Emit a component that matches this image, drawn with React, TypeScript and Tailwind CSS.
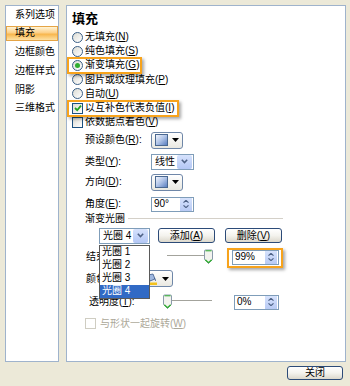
import React from 'react';

const font = "font-['Liberation_Sans','Noto_Sans_CJK_SC',sans-serif]";

const Ul = ({ c }: { c: string }) => (
  <>
    (<span className="underline">{c}</span>)
  </>
);

function Radio({ checked }: { checked?: boolean }) {
  return (
    <span className="w-[11px] h-[11px] shrink-0 rounded-full border border-[#3a5f86] bg-gradient-to-br from-[#dcdcd4] to-white flex items-center justify-center">
      {checked && <span className="w-[5px] h-[5px] rounded-full bg-[#2fae2f]" />}
    </span>
  );
}

function Check({ checked, disabled }: { checked?: boolean; disabled?: boolean }) {
  return (
    <span
      className={`w-[11px] h-[11px] shrink-0 border flex items-center justify-center ${
        disabled ? 'border-[#cfcdc2] bg-white' : 'border-[#1c5180] bg-gradient-to-br from-[#dcdcd4] to-white'
      }`}
    >
      {checked && (
        <svg width="8" height="8" viewBox="0 0 8 8">
          <path d="M1 4 L3.2 6.2 L7 1.6" stroke="#21a121" strokeWidth="1.8" fill="none" />
        </svg>
      )}
    </span>
  );
}

function Highlight({ className }: { className: string }) {
  return (
    <span
      className={`absolute border-2 border-[#f7a31c] shadow-[2px_2px_3px_rgba(0,0,0,0.35)] pointer-events-none ${className}`}
    />
  );
}

function ColorButton({ children }: { children?: React.ReactNode }) {
  return (
    <div className="w-[32px] h-[17px] shrink-0 rounded-[3px] border border-[#6f87a8] bg-gradient-to-b from-white to-[#e9e8e1] flex items-center pl-[3px] gap-[4px]">
      {children ?? (
        <span className="w-[13px] h-[12px] border border-[#4a6890] bg-gradient-to-br from-[#f2f5fc] via-[#aec2e6] to-[#5b7fbf]" />
      )}
      <svg width="7" height="4" viewBox="0 0 7 4">
        <path d="M0 0 H7 L3.5 4 Z" fill="#000" />
      </svg>
    </div>
  );
}

function Combo({ text, width }: { text: string; width: string }) {
  return (
    <div className={`h-[16px] ${width} shrink-0 border border-[#7f9db9] bg-white flex items-center`}>
      <span className="flex-1 pl-[3px] leading-none whitespace-pre">{text}</span>
      <span className="w-[15px] h-[14px] mr-px bg-gradient-to-b from-[#d6e2fc] to-[#b3c7f5] rounded-[2px] flex items-center justify-center">
        <svg width="7" height="5" viewBox="0 0 7 5">
          <path d="M0.8 0.8 L3.5 3.6 L6.2 0.8" stroke="#4d6185" strokeWidth="1.5" fill="none" />
        </svg>
      </span>
    </div>
  );
}

function Spin({ value, width }: { value: string; width: string }) {
  return (
    <div className={`h-[15px] ${width} shrink-0 border border-[#7f9db9] bg-white flex items-center`}>
      <span className="flex-1 pl-[2px] leading-none">{value}</span>
      <span className="w-[12px] h-[13px] mr-px bg-gradient-to-b from-[#d6e2fc] to-[#b8caf4] flex flex-col items-center justify-center gap-[2px]">
        <svg width="6" height="3" viewBox="0 0 6 3">
          <path d="M0.5 2.6 L3 0.4 L5.5 2.6" stroke="#4d6185" strokeWidth="1.2" fill="none" />
        </svg>
        <svg width="6" height="3" viewBox="0 0 6 3">
          <path d="M0.5 0.4 L3 2.6 L5.5 0.4" stroke="#4d6185" strokeWidth="1.2" fill="none" />
        </svg>
      </span>
    </div>
  );
}

function PushButton({ children, className }: { children: React.ReactNode; className: string }) {
  return (
    <div
      className={`rounded-[3px] border border-[#2c4b78] bg-gradient-to-b from-white via-[#f4f3ee] to-[#dcd8cc] flex items-center justify-center leading-none ${className}`}
    >
      {children}
    </div>
  );
}

function Slider({ pos }: { pos: number }) {
  const x = pos * 41;
  return (
    <svg width="50" height="16" viewBox="0 0 50 16" className="shrink-0">
      <line x1="4" y1="6.5" x2="49" y2="6.5" stroke="#a3a39c" />
      <line x1="4" y1="7.5" x2="49" y2="7.5" stroke="#ffffff" />
      <g transform={`translate(${x},0.5)`}>
        <path
          d="M0.5 1.5 Q0.5 0.5 1.5 0.5 H7.5 Q8.5 0.5 8.5 1.5 V10 L4.5 14 L0.5 10 Z"
          fill="#f3f3ef"
          stroke="#8b9bab"
        />
        <path d="M1.3 10.2 L4.5 13.2 L7.7 10.2" stroke="#2fae2f" strokeWidth="1.3" fill="none" />
        <line x1="1.5" y1="1.3" x2="7.5" y2="1.3" stroke="#2fae2f" strokeWidth="1" />
      </g>
    </svg>
  );
}

function Sidebar() {
  const items = ['系列选项', '填充', '边框颜色', '边框样式', '阴影', '三维格式'];
  return (
    <div className="w-[54px] h-[357px] shrink-0 border border-[#9fb3cc] bg-white flex flex-col">
      {items.map((t) =>
        t === '填充' ? (
          <div key={t} className="h-[18.6px] flex items-start pt-px">
            <div className="h-[15px] w-full flex items-center pl-[8px] border border-[#e5a445] bg-[linear-gradient(to_bottom,#fff4d6,#fccf86_45%,#f8b64c_55%,#fde1a4)] leading-none">
              {t}
            </div>
          </div>
        ) : (
          <div key={t} className="h-[18.6px] flex items-center pl-[9px] leading-none">
            {t}
          </div>
        )
      )}
    </div>
  );
}

function Main() {
  return (
    <div className="ml-[7px] w-[280px] h-[357px] shrink-0 border border-[#9fb3cc] bg-white flex flex-col pl-[5px]">
      <div className="mt-[4px] h-[16px] flex items-center text-[13px] font-bold leading-none">填充</div>

      <div className="mt-[4px] flex flex-col">
        <div className="h-[14.2px] flex items-center gap-[2px]">
          <Radio />
          <span className="leading-none">无填充<Ul c="N" /></span>
        </div>
        <div className="h-[14.2px] flex items-center gap-[2px]">
          <Radio />
          <span className="leading-none">纯色填充<Ul c="S" /></span>
        </div>
        <div className="relative h-[14.2px] flex items-center gap-[2px]">
          <Radio checked />
          <span className="leading-none">渐变填充<Ul c="G" /></span>
          <Highlight className="left-[-5px] top-[-1.5px] w-[75px] h-[17px]" />
        </div>
        <div className="h-[14.2px] flex items-center gap-[2px]">
          <Radio />
          <span className="leading-none">图片或纹理填充<Ul c="P" /></span>
        </div>
        <div className="h-[14.2px] flex items-center gap-[2px]">
          <Radio />
          <span className="leading-none">自动<Ul c="U" /></span>
        </div>
        <div className="relative h-[14.2px] flex items-center gap-[2px]">
          <Check checked />
          <span className="leading-none">以互补色代表负值<Ul c="I" /></span>
          <Highlight className="left-[-5px] top-[-1px] w-[112px] h-[17px]" />
        </div>
        <div className="h-[14.2px] flex items-center gap-[2px]">
          <Check />
          <span className="leading-none">依数据点着色<Ul c="V" /></span>
        </div>
      </div>

      <div className="flex flex-col pl-[13px]">
        <div className="mt-[2.6px] h-[17px] flex items-center">
          <span className="w-[66px] shrink-0 leading-none">预设颜色<Ul c="R" />:</span>
          <ColorButton />
        </div>
        <div className="mt-[5px] h-[16px] flex items-center">
          <span className="w-[66px] shrink-0 leading-none">类型<Ul c="Y" />:</span>
          <Combo text="线性" width="w-[43px]" />
        </div>
        <div className="mt-[4px] h-[17px] flex items-center">
          <span className="w-[66px] shrink-0 leading-none">方向<Ul c="D" />:</span>
          <ColorButton />
        </div>
        <div className="mt-[6px] h-[15px] flex items-center">
          <span className="w-[66px] shrink-0 leading-none">角度<Ul c="E" />:</span>
          <Spin value="90°" width="w-[43px]" />
        </div>
        <div className="mt-[1px] h-[12px] flex items-center">
          <span className="leading-none shrink-0">渐变光圈</span>
          <span className="ml-[3px] mr-[62px] flex-1 border-t border-[#d4d0c8]" />
        </div>

        <div className="mt-[3px] h-[16px] flex items-center pl-[14px]">
          <div className="relative z-10">
            <Combo text="光圈 4" width="w-[51px]" />
            <div className="absolute left-0 top-[17px] w-[51px] border border-[#5a5a5a] bg-white flex flex-col">
              {['光圈 1', '光圈 2', '光圈 3', '光圈 4'].map((t, i) => (
                <div
                  key={t}
                  className={`h-[13px] flex items-center pl-[2px] leading-none whitespace-pre ${
                    i === 3 ? 'bg-[#316ac5] text-white' : ''
                  }`}
                >
                  {t}
                </div>
              ))}
            </div>
          </div>
          <PushButton className="ml-[8px] w-[57px] h-[15px]">
            <span>添加<Ul c="A" /></span>
          </PushButton>
          <PushButton className="ml-[10px] w-[57px] h-[15px]">
            <span>删除<Ul c="V" /></span>
          </PushButton>
        </div>

        <div className="mt-[6px] h-[15px] flex items-center">
          <span className="w-[78px] shrink-0 leading-none pl-px">结束位置<Ul c="O" />:</span>
          <Slider pos={1} />
          <div className="relative ml-[19px]">
            <Spin value="99%" width="w-[47px]" />
            <Highlight className="left-[-5px] right-[-4px] top-[-2px] bottom-[-3px]" />
          </div>
        </div>

        <div className="mt-[6px] h-[16px] flex items-center">
          <span className="w-[56px] shrink-0 leading-none pl-px">颜色<Ul c="C" />:</span>
          <ColorButton>
            <svg width="13" height="12" viewBox="0 0 13 12">
              <path d="M3 2 L8 1 L10 6 L5 8 Z" fill="#9fb8e0" stroke="#3c5a8c" strokeWidth="0.8" />
              <path d="M9 5 Q11 6 10.5 8" stroke="#3c5a8c" strokeWidth="0.8" fill="none" />
              <rect x="1" y="9.5" width="11" height="2.5" fill="#f4c21b" />
            </svg>
          </ColorButton>
        </div>

        <div className="mt-[8px] h-[15px] flex items-center">
          <span className="w-[78px] shrink-0 leading-none pl-[4px]">透明度<Ul c="T" />:</span>
          <Slider pos={0} />
          <div className="ml-[21px]">
            <Spin value="0%" width="w-[45px]" />
          </div>
        </div>

        <div className="mt-[8px] h-[12px] flex items-center gap-[4px] text-[#aca899]">
          <Check disabled />
          <span className="leading-none">与形状一起旋转<Ul c="W" /></span>
        </div>
      </div>
    </div>
  );
}

export default function App() {
  return (
    <div className={`w-[350px] h-[386px] bg-[#ece9d8] ${font} text-[10px] text-black select-none`}>
      <div className="flex pt-[5px] pl-[5px]">
        <Sidebar />
        <Main />
      </div>
      <div className="flex justify-end pr-[7px] mt-[4px]">
        <PushButton className="w-[56px] h-[14px]">关闭</PushButton>
      </div>
    </div>
  );
}
